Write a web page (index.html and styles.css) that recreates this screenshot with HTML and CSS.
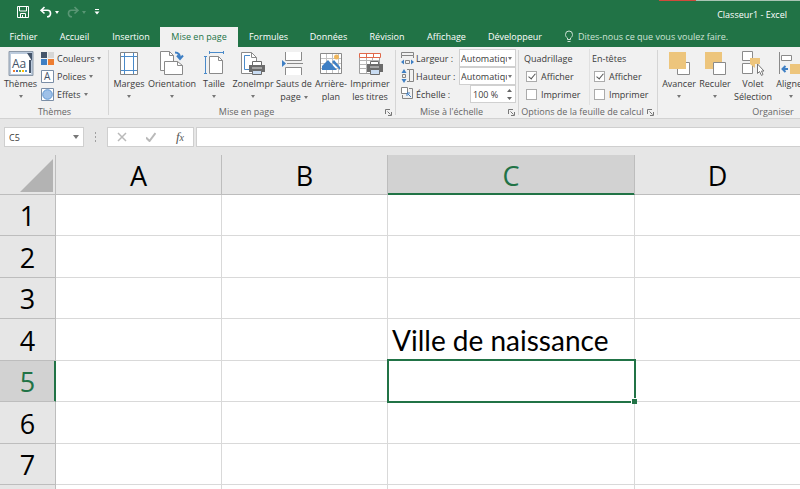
FILE: index.html
```html
<!DOCTYPE html>
<html lang="fr">
<head>
    <meta charset="UTF-8">
    <title>Classeur1 - Excel</title>
    <link rel="stylesheet" href="styles.css">
</head>
<body>
    <!-- Title bar -->
    <header class="titlebar">
        <div class="quick-access">
            <button class="qa-button" aria-label="Enregistrer">
                <svg width="12" height="12" viewBox="0 0 12 12" fill="none" stroke="#fff"><path d="M.5.5h11v11H.5z"/><path d="M2.500.5v4.500h7V.5M3.500 11.500v-4h5v4"/><path d="M5.500 9v2"/></svg>
            </button>
            <button class="qa-button" aria-label="Annuler">
                <svg width="12" height="12" viewBox="0 0 12 12" fill="none" stroke="#fff" stroke-width="1.600"><path d="M4.500 1 1 4.300l3.500 3.200M1 4.300h6.500a3 3.200 0 0 1 0 6.500H7"/></svg>
            </button>
            <span class="caret light"></span>
            <button class="qa-button faded" aria-label="Rétablir">
                <svg width="12" height="12" viewBox="0 0 12 12" fill="none" stroke="#fff" stroke-width="1.600"><path d="M7.500 1 11 4.300 7.500 7.500M11 4.300H4.500a3 3.200 0 0 0 0 6.500H5"/></svg>
            </button>
            <span class="caret light faded"></span>
            <button class="qa-button" aria-label="Personnaliser">
                <svg width="6" height="6" viewBox="0 0 6 6"><path d="M1 .5h4" stroke="#fff"/><path d="M.5 2.500h5L3 5.500z" fill="#fff"/></svg>
            </button>
        </div>
        <span class="doc-title">Classeur1 - Excel</span>
    </header>

    <!-- Tabs -->
    <nav class="tabs">
        <button class="tab">Fichier</button>
        <button class="tab">Accueil</button>
        <button class="tab">Insertion</button>
        <button class="tab active">Mise en page</button>
        <button class="tab">Formules</button>
        <button class="tab">Données</button>
        <button class="tab">Révision</button>
        <button class="tab">Affichage</button>
        <button class="tab">Développeur</button>
        <button class="tell-me">
            <svg width="10" height="13" viewBox="0 0 10 13" fill="none" stroke="#cfe3d7"><path d="M3.500 9.500V8C2 7 1.500 6 1.500 4.500a3.500 3.500 0 0 1 7 0C8.500 6 8 7 6.500 8v1.500zM3.500 11.500h3"/></svg>
            Dites-nous ce que vous voulez faire.
        </button>
    </nav>

    <!-- Ribbon -->
    <div class="ribbon">
        <section class="group">
            <div class="group-body themes">
                <button class="big-button">
                    <svg width="26" height="26" viewBox="0 0 26 26"><path d="M1 .5h24v24H1z" fill="#bccbdd" stroke="#8c99a8"/><path d="M3 3h17l3 3v17H3z" fill="#fff"/><path d="M19 2h5v8z" fill="#44546a"/><path d="M22 9v13" stroke="#44546a" stroke-width="2"/><text x="4" y="17" class="icon-text aa">Aa</text><path d="M5 20h2" stroke="#ed7d31" stroke-width="2"/><path d="M8 20h2" stroke="#4472c4" stroke-width="2"/><path d="M11 20h2" stroke="#70ad47" stroke-width="2"/><path d="M14 20h2" stroke="#ffc000" stroke-width="2"/><path d="M17 20h2" stroke="#5b9bd5" stroke-width="2"/></svg>
                    <span>Thèmes</span>
                    <span class="caret"></span>
                </button>
                <div class="stack">
                    <button class="small-button">
                        <svg width="13" height="13" viewBox="0 0 13 13"><path d="M0 0h6v6H0z" fill="#44546a"/><path d="M7 0h6v6H7z" fill="#d6d6d6"/><path d="M0 7h6v6H0z" fill="#3e7fc4"/><path d="M7 7h6v6H7z" fill="#ed7d31"/></svg>
                        Couleurs<span class="caret"></span>
                    </button>
                    <button class="small-button">
                        <svg width="13" height="13" viewBox="0 0 13 13"><path d="M.5.5h12v12H.5z" fill="#fff" stroke="#7b8ea6"/><text x="3" y="10" class="icon-text letter">A</text></svg>
                        Polices<span class="caret"></span>
                    </button>
                    <button class="small-button">
                        <svg width="13" height="13" viewBox="0 0 13 13"><path d="M.5.5h12v12H.5z" fill="#fff" stroke="#7b8ea6"/><circle cx="6.500" cy="6.500" r="4.800" fill="#9fc1e8" stroke="#5f97d3"/></svg>
                        Effets<span class="caret"></span>
                    </button>
                </div>
            </div>
            <div class="group-title">Thèmes</div>
        </section>

        <section class="group has-launcher">
            <div class="group-body page-setup">
                <button class="big-button">
                    <svg width="26" height="26" viewBox="0 0 26 26" fill="none"><path d="M4.500 1.500h17v22h-17z" fill="#fff" stroke="#858585"/><path d="M8.500 2v21M17.500 2v21M5 5.500h16M5 19.500h16" stroke="#4a8ac9"/></svg>
                    <span>Marges</span>
                    <span class="caret"></span>
                </button>
                <button class="big-button">
                    <svg width="26" height="26" viewBox="0 0 26 26"><path d="M1.500.5h9l4 4v15h-13z" fill="#fff" stroke="#8a8a8a"/><path d="M10.500.5v4h4" fill="none" stroke="#8a8a8a"/><path d="M5.500 10.500h13l5 4v9h-18z" fill="#fff" stroke="#8a8a8a"/><path d="M18.500 10.500v4h5" fill="none" stroke="#8a8a8a"/><path d="M16 1.500c3.500 0 5 1.500 5 5.500M18 4.500l3 3.500 3-3.500" fill="none" stroke="#3e7fc4" stroke-width="2"/></svg>
                    <span>Orientation</span>
                    <span class="caret"></span>
                </button>
                <button class="big-button">
                    <svg width="26" height="26" viewBox="0 0 26 26" fill="none"><path d="M8.500 5.500h9l4 4v13h-13z" fill="#fff" stroke="#8a8a8a"/><path d="M17.500 5.500v4h4" stroke="#8a8a8a"/><path d="M8 1.500h15M8.500 0v3M22.500 0v3M4.500 5v18M3 5.500h3M3 22.500h3" stroke="#4a8ac9"/></svg>
                    <span>Taille</span>
                    <span class="caret"></span>
                </button>
                <button class="big-button">
                    <svg width="26" height="26" viewBox="0 0 26 26" fill="none"><path d="M1.500 1.500h10l5 5v16h-15z" fill="#fff" stroke="#8a8a8a"/><path d="M11.500 1.500v5h5" stroke="#8a8a8a"/><path d="M10 4.500H4.500v14H9" stroke="#4a8ac9"/><path d="M12.500 10.500h9v5h-9z" fill="#fff" stroke="#6b6b6b"/><path d="M9 14h16v7H9z" fill="#6b6b6b"/><path d="M12 17h10" stroke="#ddd"/><path d="M12.500 19.500h9v4h-9z" fill="#c9dcf2" stroke="#6b6b6b"/></svg>
                    <span>ZoneImpr</span>
                    <span class="caret"></span>
                </button>
                <button class="big-button">
                    <svg width="26" height="26" viewBox="0 0 26 26" fill="none"><path d="M4.500 1v8.500h16V1M4.500 24v-7.500h16V24" fill="#fff" stroke="#8a8a8a"/><path d="M6 12.500h16" stroke="#8a8a8a"/><path d="M1 9l4 3.500L1 16z" fill="#3e7fc4"/></svg>
                    <span>Sauts de</span>
                    <span>page<span class="caret"></span></span>
                </button>
                <button class="big-button">
                    <svg width="26" height="26" viewBox="0 0 26 26" fill="none"><path d="M2.500 2.500h21v20h-21z" fill="#fff" stroke="#8a8a8a"/><path d="M8.500 3v19M14.500 3v19M20.500 3v19M3 7.500h20M3 12.500h20M3 17.500h20" stroke="#c2c2c2"/><path d="M4 19v-4l6-6 9 10z" fill="#3e7fc4"/><path d="M14 11l2-2 6 7v3z" fill="#3e7fc4"/><circle cx="18.500" cy="6" r="2.500" fill="#efb65c"/></svg>
                    <span>Arrière-</span>
                    <span>plan</span>
                </button>
                <button class="big-button">
                    <svg width="26" height="26" viewBox="0 0 26 26" fill="none"><path d="M2.500 4v18.500h20V4" fill="#fff" stroke="#a0a0a0"/><path d="M9.500 4v18M15.500 4v18M3 9.500h19M3 13.500h19M3 17.500h19" stroke="#b5b5b5"/><path d="M2.500 2.500h21v4h-21zM9.500 2v5M16.500 2v5" fill="#fff" stroke="#e0694b"/><path d="M13.500 10.500h8v4h-8z" fill="#fff" stroke="#6b6b6b"/><path d="M10 13h16v8H10z" fill="#6b6b6b"/><path d="M13 16h9" stroke="#ddd"/><path d="M13.500 18.500h9v5h-9z" fill="#c9dcf2" stroke="#6b6b6b"/></svg>
                    <span>Imprimer</span>
                    <span>les titres</span>
                </button>
            </div>
            <div class="group-title">Mise en page</div>
            <svg class="launcher" width="7" height="7" viewBox="0 0 7 7" fill="none" stroke="#777"><path d="M.5 5V.5H5M2.500 2.500l3 3M6.500 3v3.500H3"/></svg>
        </section>

        <section class="group has-launcher">
            <div class="group-body scale">
                <div class="field">
                    <svg width="13" height="14" viewBox="0 0 13 14" fill="none"><path d="M.5 1.500h12v3H.5zM.5 7V4.500M12.500 7V4.500" stroke="#858585"/><path d="M4.500 9.500h4v3h-4z" stroke="#858585"/><path d="M0 11l3-2.500v5zM13 11l-3-2.500v5z" fill="#3e7fc4"/></svg>
                    <label for="largeur">Largeur :</label>
                    <span class="select-box"><select id="largeur"><option>Automatique</option></select><span class="caret"></span></span>
                </div>
                <div class="field">
                    <svg width="13" height="14" viewBox="0 0 13 14" fill="none"><path d="M8.500.5h4v12h-4zM6 .5h2.500M6 12.500h2.500M1.500 5.500h3v3h-3z" stroke="#858585"/><path d="M3 0l2.500 4h-5zM3 14l2.500-4h-5z" fill="#3e7fc4"/></svg>
                    <label for="hauteur">Hauteur :</label>
                    <span class="select-box"><select id="hauteur"><option>Automatique</option></select><span class="caret"></span></span>
                </div>
                <div class="field">
                    <svg width="13" height="14" viewBox="0 0 13 14" fill="none"><path d="M.5.5h6v6h-6z" fill="#fff" stroke="#858585"/><path d="M8 1.500h3.500v10h-10V8" stroke="#858585"/><path d="M6 6l4 4M6 9V6h3" stroke="#3e7fc4"/></svg>
                    <label for="echelle">Échelle :</label>
                    <span class="spin-box"><input id="echelle" type="text" value="100 %"><svg width="5" height="11" viewBox="0 0 5 11" fill="#666"><path d="M0 3h5L2.500 0zM0 8h5l-2.500 3z"/></svg></span>
                </div>
            </div>
            <div class="group-title">Mise à l'échelle</div>
            <svg class="launcher" width="7" height="7" viewBox="0 0 7 7" fill="none" stroke="#777"><path d="M.5 5V.5H5M2.500 2.500l3 3M6.500 3v3.500H3"/></svg>
        </section>

        <section class="group has-launcher">
            <div class="group-body options">
                <div class="option-column">
                    <div class="option-title">Quadrillage</div>
                    <label class="check"><input type="checkbox" checked>Afficher</label>
                    <label class="check"><input type="checkbox">Imprimer</label>
                </div>
                <div class="option-column">
                    <div class="option-title">En-têtes</div>
                    <label class="check"><input type="checkbox" checked>Afficher</label>
                    <label class="check"><input type="checkbox">Imprimer</label>
                </div>
            </div>
            <div class="group-title">Options de la feuille de calcul</div>
            <svg class="launcher" width="7" height="7" viewBox="0 0 7 7" fill="none" stroke="#777"><path d="M.5 5V.5H5M2.500 2.500l3 3M6.500 3v3.500H3"/></svg>
        </section>

        <section class="group">
            <div class="group-body arrange">
                <button class="big-button">
                    <svg width="26" height="26" viewBox="0 0 26 26"><path d="M11.500 11.500h12v12h-12z" fill="#fff" stroke="#8a8a8a"/><path d="M3 1h17v17H3z" fill="#edc57c"/></svg>
                    <span>Avancer</span>
                    <span class="caret"></span>
                </button>
                <button class="big-button">
                    <svg width="26" height="26" viewBox="0 0 26 26"><path d="M3 1h17v17H3z" fill="#edc57c"/><path d="M11.500 11.500h12v12h-12z" fill="#fff" stroke="#8a8a8a"/></svg>
                    <span>Reculer</span>
                    <span class="caret"></span>
                </button>
                <button class="big-button">
                    <svg width="26" height="26" viewBox="0 0 26 26"><path d="M2.500.5h10v9h-10zM2.500 12.500h10v10h-10z" fill="#fff" stroke="#8a8a8a"/><path d="M10 7h10v6h-5v4l-5-4z" fill="#edc57c"/><path d="M17.500 13v9.500l2-2 2 4 1.500-1-1.500-3.500H24z" fill="#fff" stroke="#777"/></svg>
                    <span>Volet</span>
                    <span>Sélection</span>
                </button>
                <button class="big-button">
                    <svg width="26" height="26" viewBox="0 0 26 26" fill="none"><path d="M1.500 1v22" stroke="#8a8a8a"/><path d="M3.500 4.500h10v5h-10z" fill="#fff" stroke="#8a8a8a"/><path d="M12 13h12v10H12z" fill="#edc57c"/><path d="M10 18H5M7.500 15l-3 3 3 3" stroke="#3e7fc4" stroke-width="2"/></svg>
                    <span>Aligner</span>
                    <span class="caret"></span>
                </button>
            </div>
            <div class="group-title">Organiser</div>
        </section>
    </div>

    <!-- Formula bar -->
    <div class="formula-bar">
        <div class="name-box">
            <input type="text" value="C5" aria-label="Zone Nom">
            <span class="caret big"></span>
        </div>
        <svg class="grip" width="3" height="10" viewBox="0 0 3 10" fill="#a0a0a0"><path d="M1 0h1v2H1zM1 4h1v2H1zM1 8h1v2H1z"/></svg>
        <div class="formula-buttons">
            <button aria-label="Annuler"><svg width="10" height="10" viewBox="0 0 10 10" stroke="#b9b9b9" stroke-width="1.500"><path d="M1 1l8 8M9 1L1 9"/></svg></button>
            <button aria-label="Entrer"><svg width="10" height="10" viewBox="0 0 10 10" fill="none" stroke="#b9b9b9" stroke-width="2"><path d="M0 5.500L3.500 9 9.500 1"/></svg></button>
            <button class="fx">f<small>x</small></button>
        </div>
        <input class="formula" type="text" aria-label="Barre de formule">
    </div>

    <!-- Sheet -->
    <div class="sheet">
        <table>
            <colgroup>
                <col class="col-head"><col class="col-std"><col class="col-std"><col class="col-wide"><col class="col-std">
            </colgroup>
            <thead>
                <tr><th class="corner"><svg width="33" height="33" viewBox="0 0 33 33"><path d="M33 0v33H0z" fill="#b3b3b3"/></svg></th><th>A</th><th>B</th><th class="selected">C</th><th>D</th></tr>
            </thead>
            <tbody>
                <tr><th>1</th><td></td><td></td><td></td><td></td></tr>
                <tr><th>2</th><td></td><td></td><td></td><td></td></tr>
                <tr><th>3</th><td></td><td></td><td></td><td></td></tr>
                <tr><th>4</th><td></td><td></td><td>Ville de naissance</td><td></td></tr>
                <tr><th class="selected">5</th><td></td><td></td><td class="active-cell"></td><td></td></tr>
                <tr><th>6</th><td></td><td></td><td></td><td></td></tr>
                <tr><th>7</th><td></td><td></td><td></td><td></td></tr>
                <tr><th></th><td></td><td></td><td></td><td></td></tr>
            </tbody>
        </table>
    </div>
</body>
</html>
```

FILE: styles.css
```css
* {
    box-sizing: border-box;
}
body {
    margin: 0;
    height: 100vh;
    display: flex;
    flex-direction: column;
    overflow: hidden;
    background-color: #e6e6e6;
    font-family: "Open Sans", "Noto Sans", sans-serif;
    font-size: 9px;
    line-height: 13px;
    color: #3b3b3b;
}
button, input, select {
    font: inherit;
    color: inherit;
    background: none;
    border: 0;
    padding: 0;
    margin: 0;
}
svg {
    display: block;
    flex: none;
}
.caret {
    display: inline-block;
    flex: none;
    border: 3px solid transparent;
    border-top-color: #777;
    border-width: 3px 2px 0;
}
.caret.light {
    border-top-color: #fff;
}
.caret.big {
    border-width: 4px 3px 0;
}
.faded {
    opacity: 0.25;
}

/* Title bar */
.titlebar {
    position: relative;
    display: flex;
    justify-content: space-between;
    align-items: center;
    height: 27px;
    flex: none;
    padding: 0 13px 3px 17px;
    background-color: #217346;
    color: #fff;
}
.titlebar::before {
    content: "";
    position: absolute;
    top: 0;
    right: 0;
    width: 141px;
    height: 1px;
    background: linear-gradient(to right, #d04a3c 37px, #a9c4b4 37px);
}
.quick-access {
    display: flex;
    align-items: center;
}
.qa-button {
    margin-right: 11px;
}
.quick-access .qa-button + .caret {
    margin-left: -8px;
    margin-right: 8px;
}
.doc-title {
    padding-top: 4px;
}

/* Tabs */
.tabs {
    display: grid;
    grid-template-columns: 47px 55px 58px 78px 61px 59px 58px 61px 76px 1fr;
    height: 20px;
    flex: none;
    background-color: #217346;
    color: #fff;
}
.tab {
    padding-bottom: 1px;
    white-space: nowrap;
}
.tab.active {
    background-color: #f1f1f1;
    color: #217346;
}
.tell-me {
    display: flex;
    align-items: center;
    gap: 4px;
    padding-left: 11px;
    padding-bottom: 1px;
    color: #cfe3d7;
    white-space: nowrap;
}

/* Ribbon */
.ribbon {
    display: flex;
    height: 72px;
    flex: none;
    overflow: hidden;
    background-color: #f1f1f1;
    border-bottom: 1px solid #d2d2d2;
}
.group {
    position: relative;
    flex: none;
    padding-top: 2px;
}
.group::after {
    content: "";
    position: absolute;
    top: 3px;
    bottom: 3px;
    right: 0;
    width: 1px;
    background-color: #d5d5d5;
}
.group-body {
    height: 56px;
}
.group-title {
    text-align: center;
    color: #666;
    white-space: nowrap;
}
.has-launcher .group-title {
    padding-right: 12px;
}
.launcher {
    position: absolute;
    right: 4px;
    bottom: 2px;
}
.big-button {
    display: flex;
    flex-direction: column;
    align-items: center;
    padding-top: 2px;
    white-space: nowrap;
}
.big-button > .caret {
    margin-top: 5px;
}
.big-button span .caret {
    margin-left: 3px;
    vertical-align: middle;
}
.themes {
    display: grid;
    grid-template-columns: 41px 68px;
}
.small-button {
    display: flex;
    align-items: center;
    gap: 3px;
    height: 18px;
}
.page-setup {
    display: grid;
    grid-template-columns: 36px 50px 34px 44px 38px 36px 42px;
    padding: 0 5px 0 2px;
}
.arrange {
    display: grid;
    grid-template-columns: 36px 36px 40px 36px;
    width: 230px;
    padding-left: 3px;
}
.scale {
    width: 123px;
    padding: 0 3px 0 5px;
}
.field {
    display: flex;
    align-items: center;
    gap: 2px;
    height: 18px;
}
.field label {
    flex: 1;
    white-space: nowrap;
}
.select-box, .spin-box {
    display: flex;
    align-items: center;
    justify-content: space-between;
    width: 57px;
    height: 18px;
    padding: 0 3px 0 1px;
    background-color: #fff;
    border: 1px solid #d0d0d0;
}
.select-box select {
    appearance: none;
    width: 46px;
    overflow: hidden;
    text-overflow: clip;
}
.spin-box {
    width: 46px;
}
.spin-box input {
    width: 30px;
    padding-left: 1px;
}
.options {
    display: grid;
    grid-template-columns: 70px 69px;
}
.option-column {
    padding-left: 5px;
}
.option-column + .option-column {
    padding-left: 2px;
    border-left: 1px solid #e0e0e0;
}
.option-title, .check {
    display: flex;
    align-items: center;
    height: 18px;
}
.check {
    gap: 4px;
    padding-left: 2px;
}
.check input {
    appearance: none;
    width: 11px;
    height: 11px;
    background-color: #fff;
    border: 1px solid #ababab;
}
.check input:checked::before {
    content: "";
    display: block;
    width: 3px;
    height: 6px;
    margin: 0 0 0 3px;
    border: solid #555;
    border-width: 0 1px 1px 0;
    transform: rotate(40deg);
}
.icon-text {
    font-family: "Open Sans", sans-serif;
    fill: #44546a;
}
.aa {
    font-size: 12px;
}
.letter {
    font-size: 10px;
}

/* Formula bar */
.formula-bar {
    display: flex;
    align-items: center;
    height: 36px;
    flex: none;
}
.name-box, .formula-buttons, .formula {
    display: flex;
    align-items: center;
    height: 20px;
    background-color: #fff;
    border: 1px solid #cfcfcf;
}
.name-box {
    width: 80px;
    margin-left: 4px;
    padding: 0 4px;
}
.name-box input {
    flex: 1;
    min-width: 0;
}
.grip {
    margin: 0 10px;
}
.formula-buttons {
    width: 87px;
    margin-right: 2px;
    justify-content: space-between;
    padding: 0 9px;
}
.fx {
    font-family: "Liberation Serif", serif;
    font-size: 13px;
    font-style: italic;
    color: #555;
}
.fx small {
    font-size: 10px;
}
.formula {
    flex: 1;
    border-right: 0;
}

/* Sheet */
.sheet {
    flex: 1;
    overflow: hidden;
}
table {
    table-layout: fixed;
    width: 801px;
    border-collapse: separate;
    border-spacing: 0;
}
.col-head {
    width: 56px;
}
.col-std {
    width: 166px;
}
.col-wide {
    width: 247px;
}
th, td {
    height: 41px;
    padding: 0;
    border-right: 1px solid #d9d9d9;
    border-bottom: 1px solid #d9d9d9;
    line-height: 36px;
}
tbody tr:nth-child(even) > * {
    height: 42px;
}
th {
    padding-top: 2px;
    background-color: #e6e6e6;
    border-color: #bdbdbd;
    font-size: 27px;
    font-weight: normal;
    color: #000;
}
thead th {
    height: 40px;
}
th.selected {
    background-color: #d2d2d2;
    color: #217346;
}
thead .selected {
    border-bottom-color: #217346;
    box-shadow: inset 0 -1px #217346;
}
tbody .selected {
    border-right-color: #217346;
    box-shadow: inset -1px 0 #217346;
}
.corner svg {
    margin-left: 20px;
}
td {
    position: relative;
    background-color: #fff;
    padding-left: 4px;
    font-family: Lato, sans-serif;
    font-size: 28px;
    color: #000;
    white-space: nowrap;
}
.active-cell::before {
    content: "";
    position: absolute;
    inset: -2px -2px -2px -1px;
    border: 2px solid #217346;
    z-index: 1;
}
.active-cell::after {
    content: "";
    position: absolute;
    right: -3px;
    bottom: -3px;
    width: 5px;
    height: 5px;
    background-color: #217346;
    border: 1px solid #fff;
    border-width: 1px 0 0 1px;
    z-index: 2;
}
```
